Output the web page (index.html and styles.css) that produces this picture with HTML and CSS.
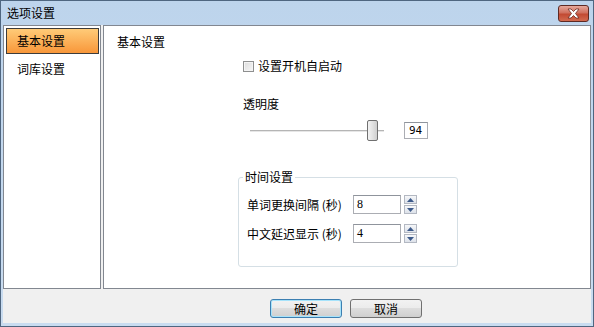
FILE: index.html
```html
<!DOCTYPE html>
<html lang="zh">
<head>
    <meta charset="utf-8">
    <title>选项设置</title>
    <link rel="stylesheet" href="styles.css">
</head>
<body>
    <div class="vindue">
        <div class="titel">
            <span>选项设置</span>
            <button class="luk">
                <svg width="15" height="11" viewBox="0 0 15 11">
                    <path d="M2 1 L5 1 L7.5 3.5 L10 1 L13 1 L9.5 5.5 L13 10 L10 10 L7.5 7.5 L5 10 L2 10 L5.5 5.5 Z" fill="#fff" stroke="#6b2a22" stroke-width="0.8"/>
                </svg>
            </button>
        </div>

        <div class="klient">
            <div class="hoved">
                <ul class="menu">
                    <li class="punkt valgt">基本设置</li>
                    <li class="punkt">词库设置</li>
                </ul>

                <div class="panel">
                    <h2>基本设置</h2>
                    <div class="indstillinger">
                        <label class="tjek"><span class="boks"></span>设置开机自启动</label>
                        <div class="overskrift">透明度</div>
                        <div class="skyder">
                            <div class="spor">
                                <div class="linje"></div>
                                <div class="knap"></div>
                            </div>
                            <div class="felt lille">94</div>
                        </div>

                        <fieldset class="gruppe">
                            <legend>时间设置</legend>
                            <div class="raekke">
                                <span class="navn">单词更换间隔 (秒)</span>
                                <div class="felt tal">8</div>
                                <div class="pile">
                                    <span class="pil"><svg width="7" height="4"><path d="M0 4 L3.5 0 L7 4 Z" fill="#3d5a8a"/></svg></span>
                                    <span class="pil"><svg width="7" height="4"><path d="M0 0 L3.5 4 L7 0 Z" fill="#3d5a8a"/></svg></span>
                                </div>
                            </div>
                            <div class="raekke">
                                <span class="navn">中文延迟显示 (秒)</span>
                                <div class="felt tal">4</div>
                                <div class="pile">
                                    <span class="pil"><svg width="7" height="4"><path d="M0 4 L3.5 0 L7 4 Z" fill="#3d5a8a"/></svg></span>
                                    <span class="pil"><svg width="7" height="4"><path d="M0 0 L3.5 4 L7 0 Z" fill="#3d5a8a"/></svg></span>
                                </div>
                            </div>
                        </fieldset>
                    </div>
                </div>
            </div>

            <div class="bund">
                <button class="knapper standard">确定</button>
                <button class="knapper">取消</button>
            </div>
        </div>
    </div>
</body>
</html>
```

FILE: styles.css
```css
* {
    box-sizing: border-box;
}

body {
    margin: 0;
    font-family: "Noto Sans CJK SC", "Liberation Sans", sans-serif;
    font-size: 12px;
    color: #000;
}

.vindue {
    width: 594px;
    height: 327px;
    border: 1px solid #4f6680;
    background: linear-gradient(#bdd4ec, #c9dcf0);
    display: flex;
    flex-direction: column;
}

.titel {
    height: 24px;
    display: flex;
    align-items: center;
    justify-content: space-between;
    padding: 0 4px 0 6px;
    line-height: 16px;
}

.luk {
    width: 31px;
    height: 17px;
    border: 1px solid #5e2a24;
    border-radius: 3px;
    background: linear-gradient(#e6a89c, #d0705e 45%, #c24a33 55%, #d26a4f);
    padding: 0;
    display: flex;
    align-items: center;
    justify-content: center;
}

.klient {
    flex: 1;
    margin: 0 2px 3px 2px;
    background: #f0f0f0;
    display: flex;
    flex-direction: column;
}

.hoved {
    height: 264px;
    display: flex;
    gap: 2px;
}

.menu {
    width: 98px;
    margin: 0;
    padding: 0;
    list-style: none;
    background: #fff;
    border: 1px solid #828790;
}

.punkt {
    height: 26px;
    line-height: 24px;
    margin: 2px 1px 0 2px;
    padding-left: 10px;
    border: 1px solid transparent;
}

.valgt {
    border-color: #3c3c3c;
    background: linear-gradient(#ffcb78, #f8973a);
}

.panel {
    flex: 1;
    background: #fff;
    border: 1px solid #828790;
    padding: 8px 0 0 13px;
}

h2 {
    margin: 0;
    font-size: 12px;
    font-weight: normal;
    line-height: 16px;
}

.indstillinger {
    margin-left: 121px;
    width: 220px;
}

.tjek {
    display: flex;
    align-items: center;
    gap: 4px;
    margin: 8px 0 0 5px;
    line-height: 16px;
}

.boks {
    width: 11px;
    height: 11px;
    border: 1px solid #8e8f8f;
    background: linear-gradient(135deg, #dcdcdc, #f6f6f6);
    box-shadow: inset 0 0 0 1px #f4f4f4;
}

.overskrift {
    margin: 22px 0 0 5px;
    line-height: 16px;
}

.skyder {
    display: flex;
    align-items: center;
    margin: 8px 0 0 12px;
    gap: 20px;
}

.spor {
    width: 134px;
    height: 21px;
    display: flex;
    align-items: center;
    padding-left: 117px;
    position: relative;
}

.linje {
    position: absolute;
    left: 0;
    right: 0;
    top: 10px;
    height: 2px;
    border-top: 1px solid #b5b5b5;
    border-bottom: 1px solid #e6e6e6;
}

.knap {
    width: 11px;
    height: 21px;
    border: 1px solid #707070;
    border-radius: 2px;
    background: linear-gradient(90deg, #f3f3f3, #e2e2e2 50%, #cfcfcf);
    position: relative;
}

.felt {
    border: 1px solid #abadb3;
    border-top-color: #8f949c;
    background: #fff;
    font-family: "DejaVu Sans Mono", "Liberation Mono", monospace;
    font-size: 11px;
    padding-left: 4px;
}

.lille {
    width: 24px;
    height: 17px;
    line-height: 15px;
}

.gruppe {
    margin: 28px 0 0 0;
    width: 220px;
    padding: 10px 0 23px 8px;
    border: 1px solid #d5dfe5;
    border-radius: 3px;
}

.gruppe legend {
    padding: 0 2px;
    margin-left: -4px;
    line-height: 16px;
}

.raekke {
    display: flex;
    align-items: center;
    height: 19px;
    margin-bottom: 10px;
}

.raekke:last-child {
    margin-bottom: 0;
}

.navn {
    width: 106px;
    line-height: 16px;
}

.tal {
    width: 48px;
    height: 19px;
    line-height: 17px;
    padding-left: 3px;
    font-family: "Liberation Serif", serif;
    font-size: 12px;
}

.pile {
    display: flex;
    flex-direction: column;
    margin-left: 3px;
    gap: 1px;
}

.pil {
    width: 13px;
    height: 9px;
    border: 1px solid #b3b8c2;
    background: linear-gradient(#f6f7f9, #dde2ea);
    display: flex;
    align-items: center;
    justify-content: center;
}

.pil svg {
    display: block;
}

.bund {
    flex: 1;
    display: flex;
    gap: 8px;
    padding: 10px 0 0 267px;
}

.knapper {
    width: 72px;
    height: 19px;
    padding: 0;
    font-family: inherit;
    font-size: 12px;
    line-height: 16px;
    border: 1px solid #707070;
    border-radius: 3px;
    background: linear-gradient(#f2f2f2, #ebebeb 50%, #dddddd 50%, #cfcfcf);
}

.standard {
    border-color: #3c7fb1;
    box-shadow: inset 0 0 0 1px #a6e3fb;
}
```
